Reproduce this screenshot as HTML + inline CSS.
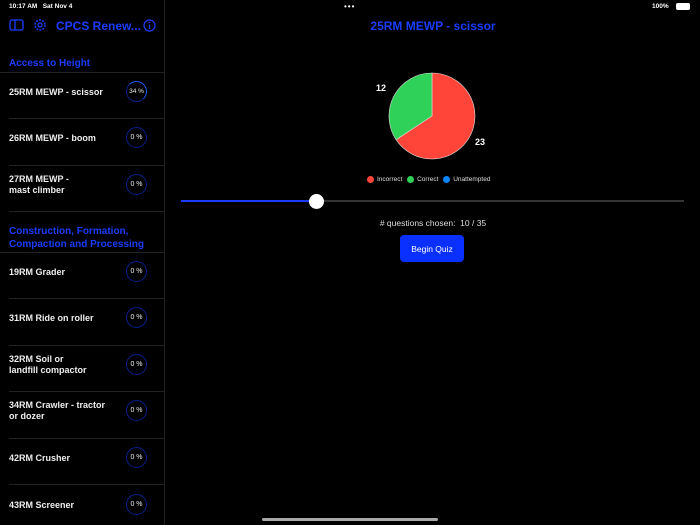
<!DOCTYPE html><html><head><style>
*{margin:0;padding:0;box-sizing:border-box}
body{width:700px;height:525px;background:#000;font-family:"Liberation Sans",sans-serif;color:#fff;position:relative;overflow:hidden}
.a{position:absolute}
.side{left:0;top:0;width:165px;height:525px;border-right:1px solid #222}
.row{position:absolute;left:0;width:165px;height:40px;font-size:9px;font-weight:bold;display:flex;align-items:center;padding-left:9px;line-height:11px;color:#eee}
.sep{position:absolute;left:9px;width:156px;border-top:1px solid #222}
.ring{position:absolute;left:126px;top:9px;width:21px;height:21px;border-radius:50%;border:1.5px solid #0a1f8a;font-size:7px;text-align:center;font-weight:normal}
.ring span{position:absolute;left:0;right:0;top:5px;line-height:9px}
.hd{position:absolute;left:9px;color:#1a3cff;font-weight:bold;font-size:10px;line-height:13px}
</style></head><body>
<div class="a" style="left:9px;top:3px;font-size:6.5px;font-weight:bold">10:17 AM&nbsp;&nbsp; Sat Nov 4</div>
<div class="a" style="left:344px;top:2px;font-size:8px;letter-spacing:1px">•••</div>
<div class="a" style="left:652px;top:3px;font-size:6.5px;font-weight:bold">100%</div>
<div class="a" style="left:676px;top:3px;width:14px;height:7px;border:1px solid #fff;border-radius:2px;background:#fff"></div>
<div class="side a">
<svg class="a" style="left:9px;top:19px" width="15" height="13"><rect x="1" y="1" width="13" height="10" rx="2" fill="none" stroke="#1a3cff" stroke-width="1.3"/><line x1="6" y1="1" x2="6" y2="11" stroke="#1a3cff" stroke-width="1.3"/></svg>
<svg class="a" style="left:33px;top:18px" width="14" height="14"><circle cx="7" cy="7" r="5" fill="none" stroke="#1a3cff" stroke-width="1.5" stroke-dasharray="2 1.2"/><circle cx="7" cy="7" r="2" fill="none" stroke="#1a3cff" stroke-width="1.2"/></svg>
<div class="a" style="left:56px;top:19px;font-size:12px;font-weight:bold;color:#1a3cff">CPCS Renew...</div>
<svg class="a" style="left:143px;top:19px" width="13" height="13"><circle cx="6.5" cy="6.5" r="5.5" fill="none" stroke="#1a3cff" stroke-width="1.2"/><line x1="6.5" y1="5.5" x2="6.5" y2="10" stroke="#1a3cff" stroke-width="1.3"/><circle cx="6.5" cy="3.5" r="0.8" fill="#1a3cff"/></svg>
<div class="hd" style="top:57px">Access to Height</div>
<div class="a" style="left:0;top:72px;width:165px;border-top:1px solid #222"></div>
<div class="row" style="top:72px">25RM MEWP - scissor<div class="ring" style="border-top-color:#1a5cff;border-right-color:#1a5cff;font-size:6.5px"><span>34 %</span></div></div>
<div class="sep" style="top:118px"></div>
<div class="row" style="top:118px">26RM MEWP - boom<div class="ring"><span>0 %</span></div></div>
<div class="sep" style="top:165px"></div>
<div class="row" style="top:165px">27RM MEWP -<br>mast climber<div class="ring"><span>0 %</span></div></div>
<div class="sep" style="top:211px"></div>
<div class="hd" style="top:225px">Construction, Formation,<br>Compaction and Processing</div>
<div class="a" style="left:0;top:252px;width:165px;border-top:1px solid #222"></div>
<div class="row" style="top:252px">19RM Grader<div class="ring"><span>0 %</span></div></div>
<div class="sep" style="top:298px"></div>
<div class="row" style="top:298px">31RM Ride on roller<div class="ring"><span>0 %</span></div></div>
<div class="sep" style="top:345px"></div>
<div class="row" style="top:345px">32RM Soil or<br>landfill compactor<div class="ring"><span>0 %</span></div></div>
<div class="sep" style="top:391px"></div>
<div class="row" style="top:391px">34RM Crawler - tractor<br>or dozer<div class="ring"><span>0 %</span></div></div>
<div class="sep" style="top:438px"></div>
<div class="row" style="top:438px">42RM Crusher<div class="ring"><span>0 %</span></div></div>
<div class="sep" style="top:484px"></div>
<div class="row" style="top:485px">43RM Screener<div class="ring"><span>0 %</span></div></div>
</div>
<div class="a" style="left:166px;top:19px;width:534px;text-align:center;font-size:12px;font-weight:bold;color:#1a3cff">25RM MEWP - scissor</div>
<svg class="a" style="left:380px;top:70px" width="110" height="95"><path d="M52 46 L52 3 A43 43 0 1 1 16.1 69.7 Z" fill="#ff453a" stroke="#ddd" stroke-width="0.6"/><path d="M52 46 L16.1 69.7 A43 43 0 0 1 52 3 Z" fill="#30d158" stroke="#ddd" stroke-width="0.6"/></svg>
<div class="a" style="left:376px;top:83px;font-size:9px;font-weight:bold">12</div>
<div class="a" style="left:475px;top:137px;font-size:9px;font-weight:bold">23</div>
<div class="a" style="left:367px;top:176px;font-size:6.5px;display:flex;align-items:center;gap:3px;color:#ddd">
<span style="width:7px;height:7px;border-radius:50%;background:#ff453a"></span>Incorrect&nbsp;
<span style="width:7px;height:7px;border-radius:50%;background:#30d158"></span>Correct&nbsp;
<span style="width:7px;height:7px;border-radius:50%;background:#0a84ff"></span>Unattempted</div>
<div class="a" style="left:181px;top:200px;width:503px;height:2px;background:#333"></div>
<div class="a" style="left:181px;top:200px;width:135px;height:2px;background:#1a3cff"></div>
<div class="a" style="left:309px;top:194px;width:15px;height:15px;border-radius:50%;background:#fff"></div>
<div class="a" style="left:166px;top:218px;width:534px;text-align:center;font-size:8.5px;color:#ddd">#&nbsp;questions chosen:&nbsp; 10 / 35</div>
<div class="a" style="left:400px;top:235px;width:64px;height:27px;border-radius:4px;background:#0a30ff;font-size:8.5px;display:flex;align-items:center;justify-content:center">Begin Quiz</div>
<div class="a" style="left:262px;top:518px;width:176px;height:3px;border-radius:2px;background:#aaa"></div>
</body></html>
